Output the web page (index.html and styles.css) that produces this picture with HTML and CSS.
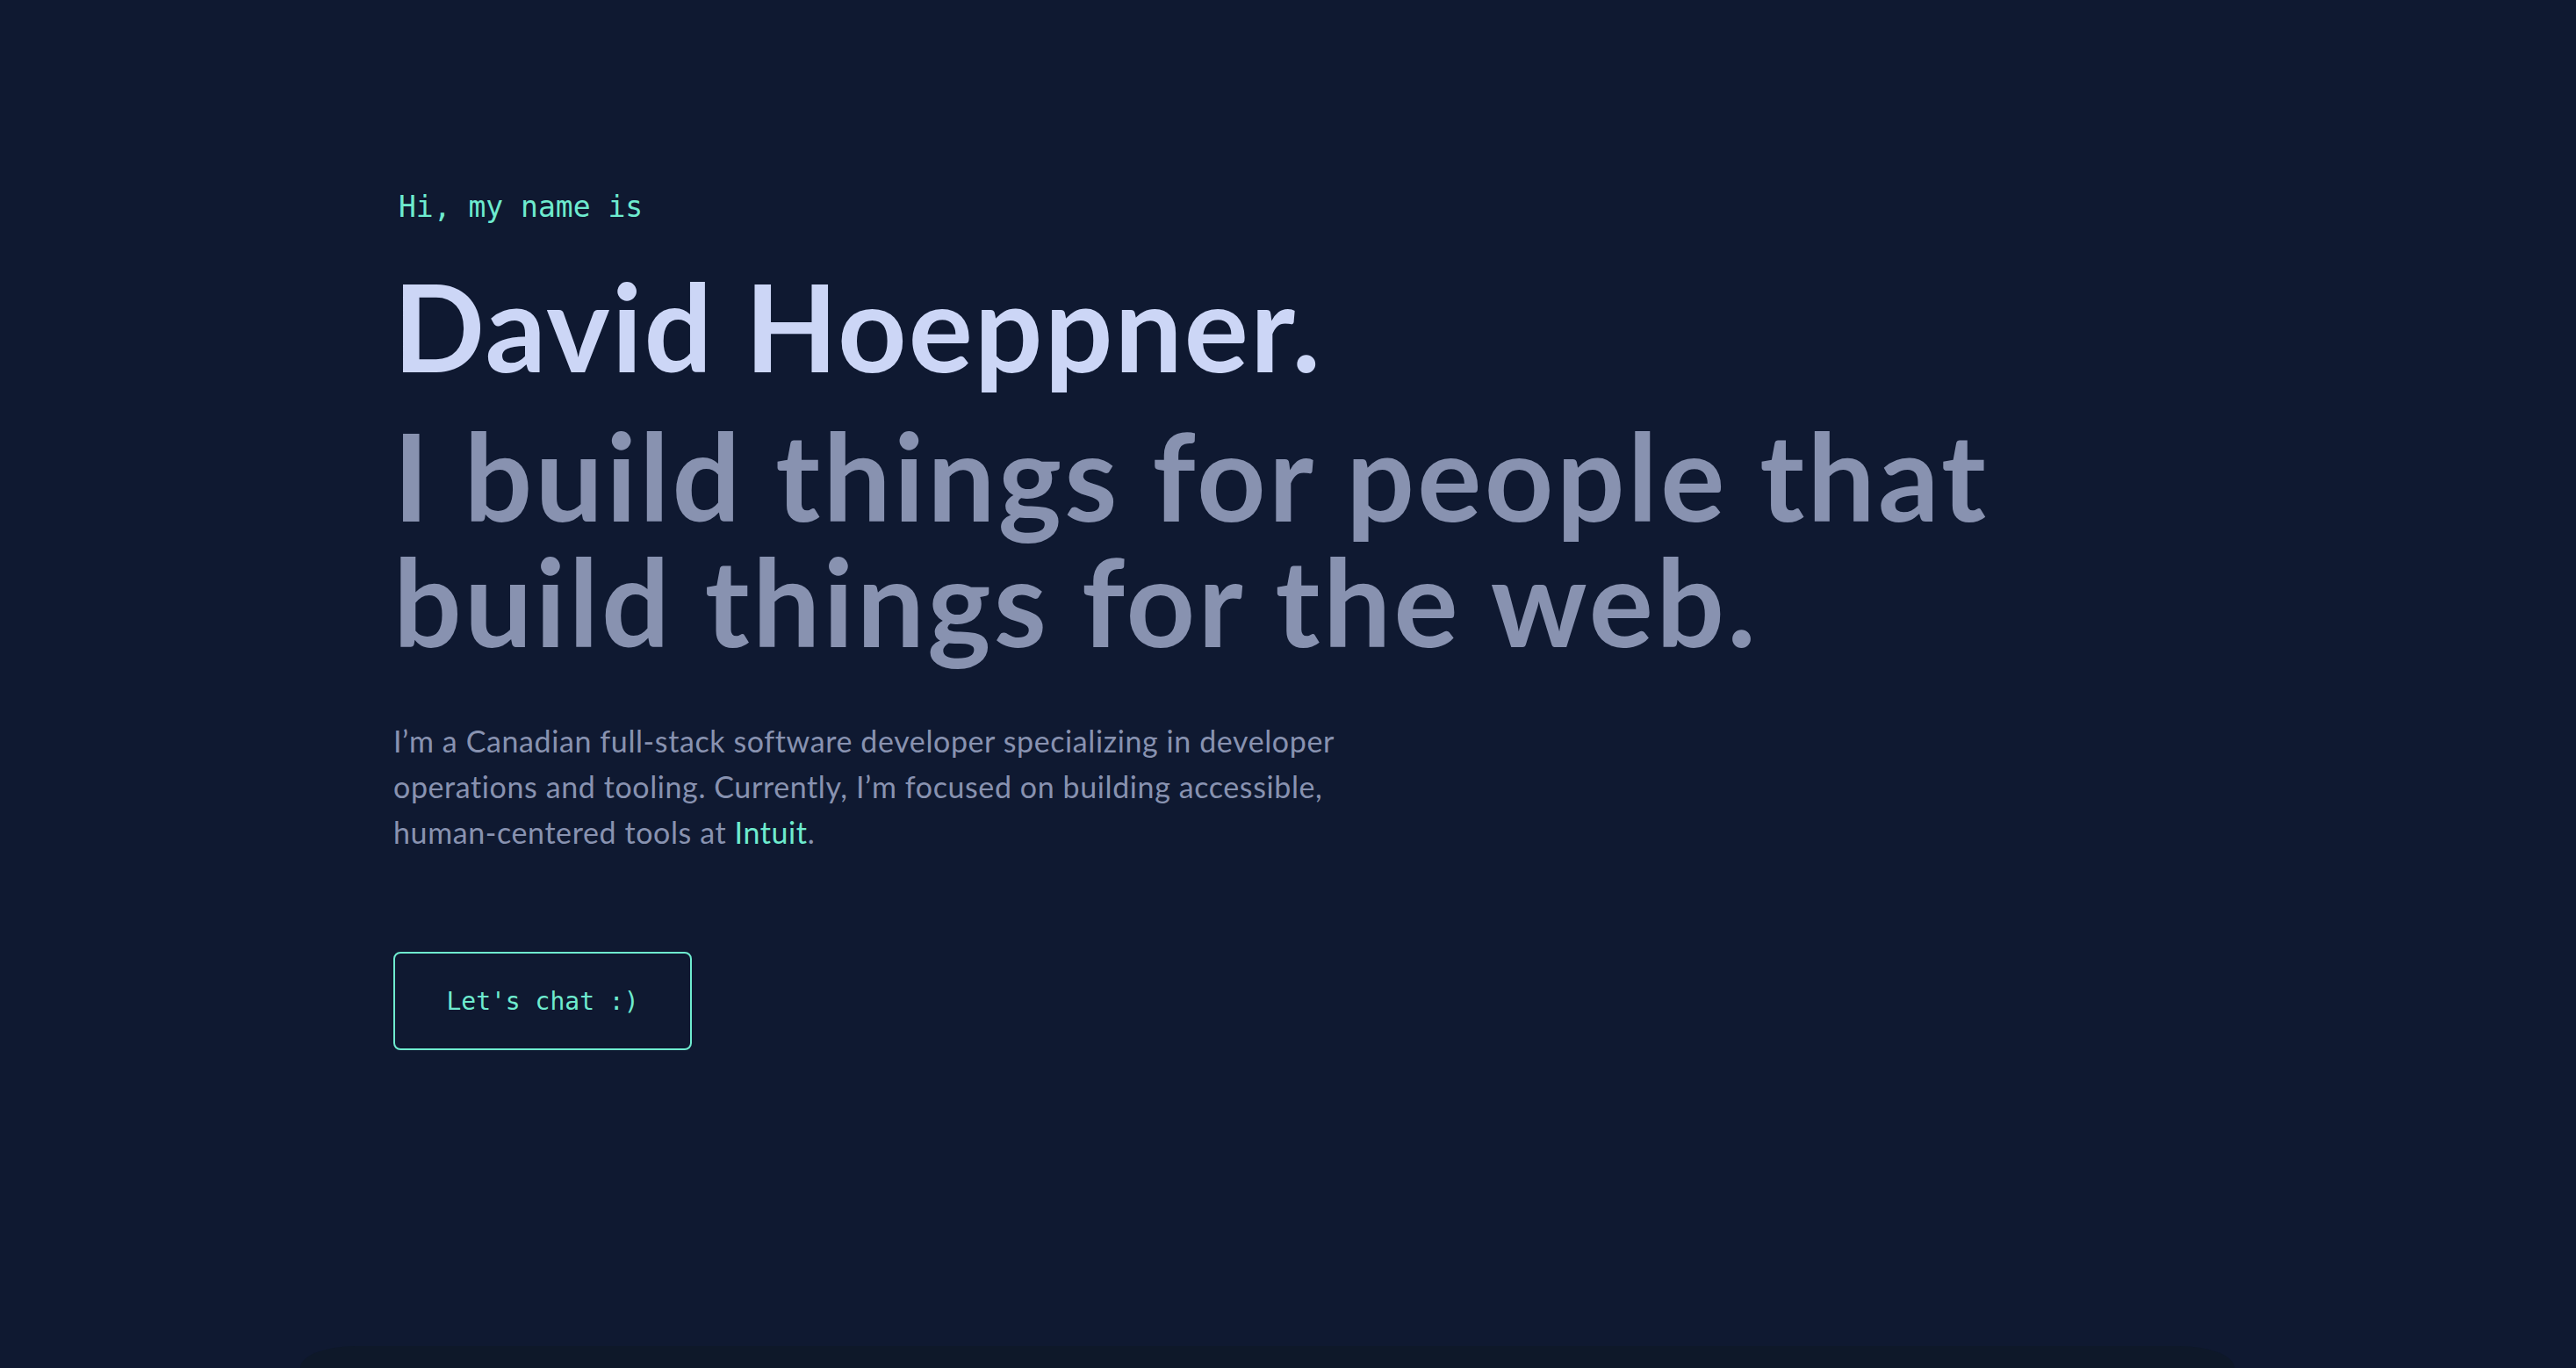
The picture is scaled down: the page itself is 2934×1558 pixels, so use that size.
FILE: index.html
```html
<!DOCTYPE html>
<html lang="en">
<head>
<meta charset="utf-8">
<title>David Hoeppner</title>
<link rel="stylesheet" href="styles.css">
</head>
<body>
<main class="page">
  <section class="hero">
    <p class="greeting">Hi, my name is</p>
    <h1 class="name">David Hoeppner.</h1>
    <h2 class="tagline">I build things for people that<br>build things for the web.</h2>
    <p class="intro">I’m a Canadian full-stack software developer specializing in developer operations and tooling. Currently, I’m focused on building accessible, <span class="nowrap">human-centered</span> tools at <a class="link" href="#">Intuit</a>.</p>
    <a class="cta" href="#">Let's chat :)</a>
  </section>
  <section class="next"></section>
</main>
</body>
</html>
```
FILE: styles.css
```css
html, body {
  margin: 0;
  padding: 0;
  height: 100%;
  overflow: hidden;
  background: #0f1931;
}
.page {
  display: flex;
  flex-direction: column;
}
.hero {
  height: 1533px;
  box-sizing: border-box;
  padding: 219px 0 0 448px;
  display: flex;
  flex-direction: column;
  align-items: flex-start;
}
.greeting {
  margin: 0 0 0 6px;
  font-family: "DejaVu Sans Mono", "Liberation Mono", monospace;
  font-size: 33px;
  line-height: 33px;
  color: #6eebcf;
}
.name {
  margin: 51px 0 0 0;
  font-family: Lato, "Noto Sans", sans-serif;
  font-weight: 700;
  font-size: 137px;
  line-height: 137px;
  letter-spacing: 2px;
  color: #ccd6f6;
}
.tagline {
  margin: 30px 0 0 0;
  font-family: Lato, "Noto Sans", sans-serif;
  font-weight: 700;
  font-size: 137px;
  line-height: 143px;
  letter-spacing: 3.3px;
  color: #8892b0;
}
.intro {
  margin: 62px 0 0 0;
  max-width: 1090px;
  font-family: Lato, "Noto Sans", sans-serif;
  font-size: 34px;
  line-height: 52px;
  letter-spacing: 0.6px;
  color: #8892b0;
}
.nowrap {
  white-space: nowrap;
}
.link {
  color: #6eebcf;
  text-decoration: none;
}
.cta {
  margin-top: 110px;
  box-sizing: border-box;
  width: 340px;
  height: 112px;
  display: flex;
  align-items: center;
  justify-content: center;
  border: 2px solid #6eebcf;
  border-radius: 8px;
  font-family: "DejaVu Sans Mono", "Liberation Mono", monospace;
  font-size: 28px;
  color: #6eebcf;
  text-decoration: none;
}
.next {
  margin-left: 342px;
  width: 2203px;
  height: 25px;
  background: #0e1829;
  border-radius: 100px 100px 0 0 / 40px 40px 0 0;
}
```
